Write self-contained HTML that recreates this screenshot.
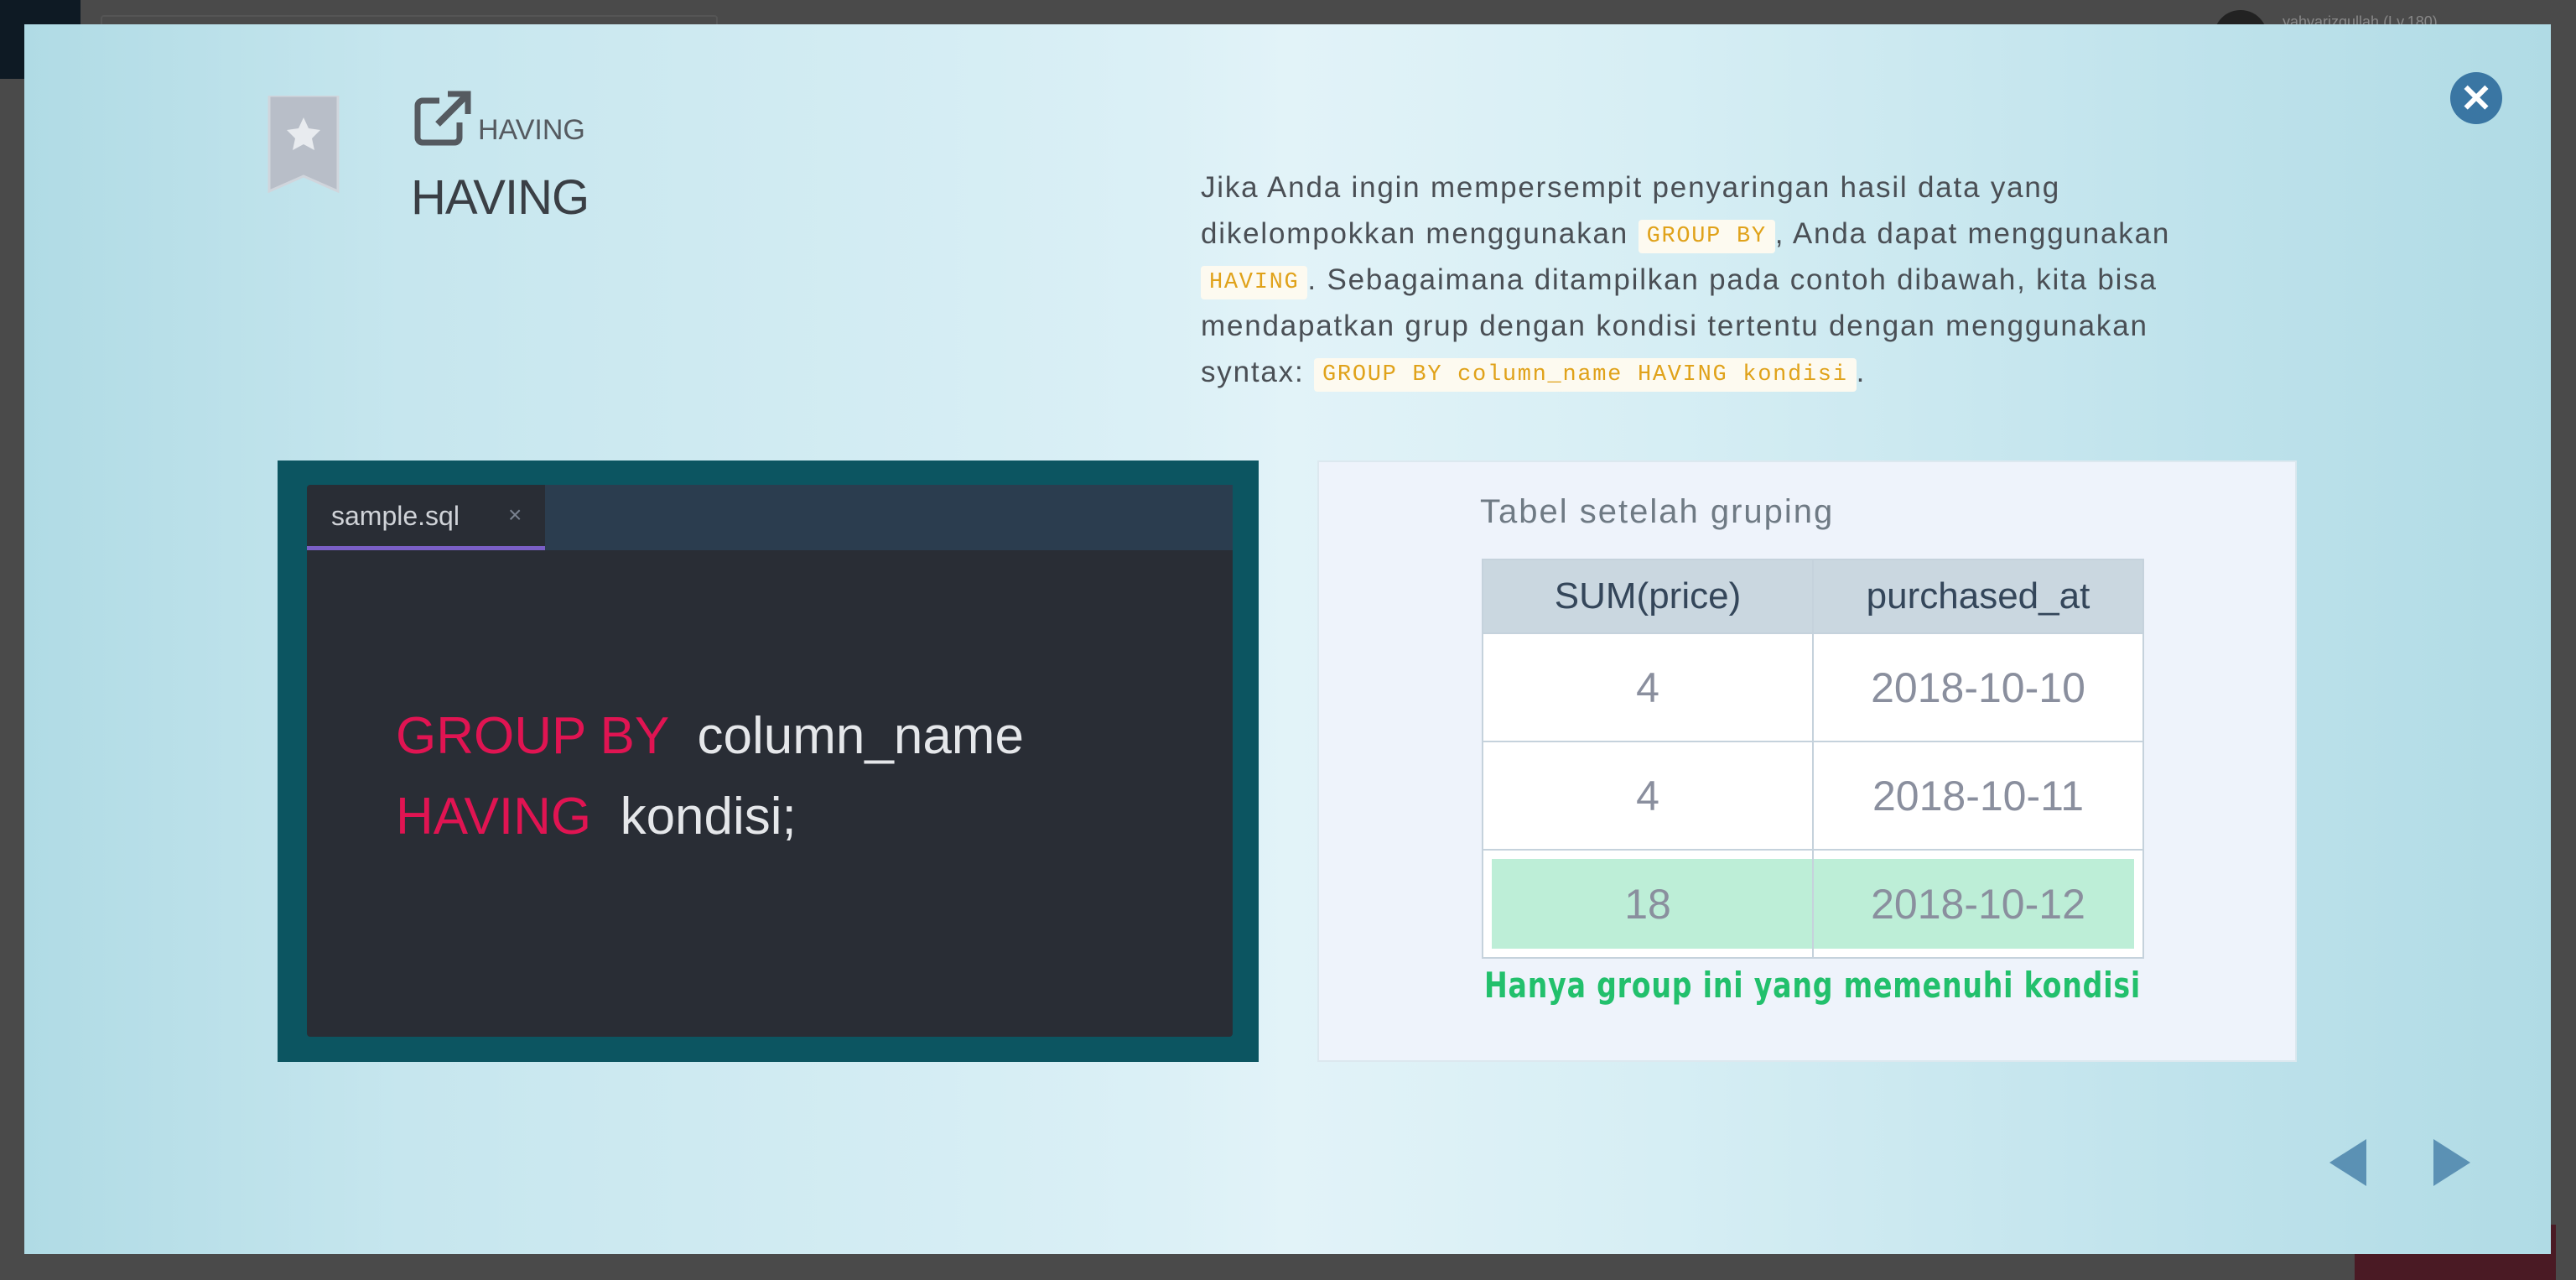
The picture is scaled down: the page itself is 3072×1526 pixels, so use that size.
<!DOCTYPE html>
<html><head><meta charset="utf-8"><style>
*{margin:0;padding:0;box-sizing:border-box}
body{width:3072px;height:1526px;background:#4a4a4a;position:relative;overflow:hidden;font-family:"Liberation Sans",sans-serif}
.a{position:absolute}
#modal{left:29px;top:29px;width:3013px;height:1466px;background:linear-gradient(90deg,#b0dbe5 0%,#c6e6ee 15%,#dbf0f6 45%,#e2f3f8 50%,#d6eef4 65%,#c0e3ec 85%,#b0dbe5 100%)}
.p{left:1432px;top:196px;font-size:35px;line-height:55px;color:#4a4f55;letter-spacing:1.8px;white-space:nowrap}
code{font-family:"Liberation Mono",monospace;font-size:27px;line-height:40px;display:inline-block;vertical-align:2px;color:#e0a21a;background:#fdfaf0;padding:0 10px;border-radius:4px;letter-spacing:1.7px}
td{border:2px solid #c5d2dc;text-align:center;color:#8a8f9e;font-size:50px}
</style></head><body>
<div class="a" style="left:0;top:0;width:96px;height:94px;background:#0e1a24"></div>
<div class="a" style="left:120px;top:18px;width:736px;height:40px;border:2px solid #555;border-radius:4px"></div>
<div class="a" style="left:2640px;top:12px;width:64px;height:64px;border-radius:50%;background:#222"></div>
<div class="a" style="left:2722px;top:16px;font-size:18px;color:#888">yahyarizqullah (Lv.180)</div>
<div class="a" style="left:2808px;top:1460px;width:240px;height:66px;background:#4a1a24"></div>
<div id="modal" class="a"></div>
<svg class="a" style="left:319px;top:114px" width="86" height="116" viewBox="0 0 86 116"><path d="M2 0H84V114L43 96L2 114Z" fill="#b8bec8" stroke="#d0d5dc" stroke-width="3"/><path d="M43 26l6 13 14 2-10 10 3 14-13-7-13 7 3-14-10-10 14-2z" fill="#e8ebef"/></svg>
<svg class="a" style="left:494px;top:108px" width="68" height="66" viewBox="0 0 68 66"><path d="M30 12H10a6 6 0 0 0-6 6v38a6 6 0 0 0 6 6h38a6 6 0 0 0 6-6V38" fill="none" stroke="#555a60" stroke-width="7"/><path d="M40 4H64V28" fill="none" stroke="#555a60" stroke-width="7"/><path d="M62 6L28 40" stroke="#555a60" stroke-width="8"/></svg>
<div class="a" style="left:570px;top:136px;font-size:34px;color:#555a60">HAVING</div>
<div class="a" style="left:490px;top:202px;font-size:58px;color:#3a3f45;letter-spacing:-1px">HAVING</div>
<div class="a p">Jika Anda ingin mempersempit penyaringan hasil data yang<br>dikelompokkan menggunakan <code>GROUP BY</code>, Anda dapat menggunakan<br><code>HAVING</code>. Sebagaimana ditampilkan pada contoh dibawah, kita bisa<br>mendapatkan grup dengan kondisi tertentu dengan menggunakan<br>syntax: <code>GROUP BY column_name HAVING kondisi</code>.</div>
<div class="a" style="left:2922px;top:86px;width:62px;height:62px;border-radius:50%;background:#3a76a3;color:#fff;font-size:46px;font-weight:bold;text-align:center;line-height:62px">✕</div>
<div class="a" style="left:331px;top:549px;width:1170px;height:717px;background:#0c5561"></div>
<div class="a" style="left:366px;top:578px;width:1104px;height:658px;background:#292d35;border-radius:4px"></div>
<div class="a" style="left:650px;top:578px;width:820px;height:78px;background:#2b3d4f"></div>
<div class="a" style="left:366px;top:651px;width:284px;height:5px;background:#7a5fc6"></div>
<div class="a" style="left:395px;top:597px;font-size:32px;color:#d0d3d8">sample.sql</div>
<div class="a" style="left:606px;top:598px;font-size:28px;color:#7a8290">×</div>
<div class="a" style="left:472px;top:842px;font-size:62px;color:#e01452;white-space:pre">GROUP BY  <span style="color:#e5e7ea">column_name</span></div>
<div class="a" style="left:472px;top:938px;font-size:62px;color:#e01452;white-space:pre">HAVING  <span style="color:#e5e7ea">kondisi;</span></div>
<div class="a" style="left:1571px;top:549px;width:1168px;height:717px;background:#eef3fb;border:2px solid #dce8ef"></div>
<div class="a" style="left:1765px;top:588px;font-size:40px;color:#6f7a84;letter-spacing:2px">Tabel setelah gruping</div>
<table class="a" style="left:1767px;top:666px;width:790px;height:474px;border-collapse:collapse;background:#fff">
<tr style="height:88px;background:#cad7e0"><td style="color:#34465a;font-size:44px;width:394px">SUM(price)</td><td style="color:#34465a;font-size:44px">purchased_at</td></tr>
<tr style="height:129px"><td>4</td><td>2018-10-10</td></tr>
<tr style="height:129px"><td>4</td><td>2018-10-11</td></tr>
<tr style="height:129px"><td style="background:#bdeed7;box-shadow:inset 10px 10px 0 #fff,inset 0 -10px 0 #fff">18</td><td style="background:#bdeed7;box-shadow:inset -10px 10px 0 #fff,inset 0 -10px 0 #fff">2018-10-12</td></tr>
</table>
<div class="a" style="left:1770px;top:1150px;font-size:42px;font-weight:bold;color:#22c06c;letter-spacing:1px;font-family:'DejaVu Sans',sans-serif;transform:scaleX(0.79);transform-origin:left;white-space:nowrap">Hanya group ini yang memenuhi kondisi</div>
<svg class="a" style="left:2778px;top:1358px" width="170" height="56"><path d="M44 0V56L0 28Z" fill="#5b91b4"/><path d="M124 0V56L168 28Z" fill="#5b91b4"/></svg>
</body></html>
